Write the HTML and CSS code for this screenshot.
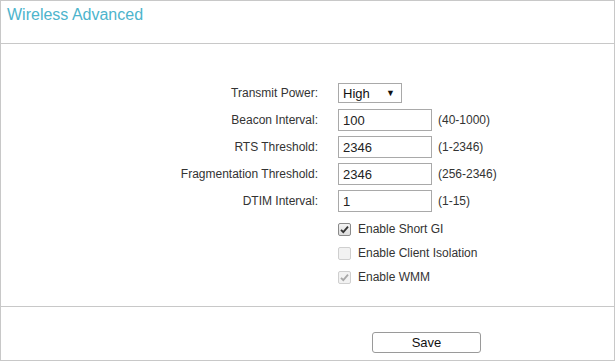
FILE: index.html
```html
<!DOCTYPE html>
<html lang="en">
<head>
    <meta charset="UTF-8">
    <meta name="viewport" content="width=device-width, initial-scale=1.0">
    <title>Wireless Advanced</title>
    <link rel="stylesheet" href="styles.css">
</head>
<body>
    <div class="panel">
        <div class="panel-head">
            <h1 class="panel-title">Wireless Advanced</h1>
        </div>

        <form class="panel-body" id="wireless-advanced-form">
            <div class="form-row">
                <label class="form-label" for="tx-power">Transmit Power:</label>
                <div class="form-control">
                    <span class="select-wrap">
                        <select id="tx-power" class="select">
                            <option>High</option>
                            <option>Middle</option>
                            <option>Low</option>
                        </select>
                    </span>
                </div>
            </div>
            <div class="form-row">
                <label class="form-label" for="beacon">Beacon Interval:</label>
                <div class="form-control">
                    <input type="text" id="beacon" class="text-input" value="100">
                    <span class="range">(40-1000)</span>
                </div>
            </div>
            <div class="form-row">
                <label class="form-label" for="rts">RTS Threshold:</label>
                <div class="form-control">
                    <input type="text" id="rts" class="text-input" value="2346">
                    <span class="range">(1-2346)</span>
                </div>
            </div>
            <div class="form-row">
                <label class="form-label" for="frag">Fragmentation Threshold:</label>
                <div class="form-control">
                    <input type="text" id="frag" class="text-input" value="2346">
                    <span class="range">(256-2346)</span>
                </div>
            </div>
            <div class="form-row">
                <label class="form-label" for="dtim">DTIM Interval:</label>
                <div class="form-control">
                    <input type="text" id="dtim" class="text-input" value="1">
                    <span class="range">(1-15)</span>
                </div>
            </div>

            <div class="check-list">
                <label class="check-row">
                    <span class="check is-checked">
                        <svg viewBox="0 0 13 13" width="13" height="13"><path d="M3 6.8 L5.3 9.2 L10 3.6" /></svg>
                    </span>
                    Enable Short GI
                </label>
                <label class="check-row">
                    <span class="check is-disabled"></span>
                    Enable Client Isolation
                </label>
                <label class="check-row">
                    <span class="check is-checked is-disabled">
                        <svg viewBox="0 0 13 13" width="13" height="13"><path d="M3 6.8 L5.3 9.2 L10 3.6" /></svg>
                    </span>
                    Enable WMM
                </label>
            </div>
        </form>

        <div class="panel-foot">
            <button type="submit" form="wireless-advanced-form" class="btn-save">Save</button>
        </div>
    </div>
</body>
</html>
```

FILE: styles.css
```css
html, body {
    margin: 0;
    padding: 0;
}
body {
    font-family: Arial, "Liberation Sans", sans-serif;
    color: #333;
    background: #fff;
}
.panel {
    width: 615px;
    height: 361px;
    box-sizing: border-box;
    border: 1px solid #c8c8c8;
    display: flex;
    flex-direction: column;
}
.panel-head {
    height: 42px;
    border-bottom: 1px solid #c8c8c8;
}
.panel-title {
    margin: 0;
    padding: 4px 0 0 6px;
    font-size: 16px;
    font-weight: normal;
    line-height: 20px;
    color: #4db4cc;
}
.panel-body {
    flex: 1;
    margin: 0;
    padding-top: 35px;
}
.form-row {
    display: grid;
    grid-template-columns: 317px auto;
    column-gap: 20px;
    align-items: center;
    height: 27px;
}
.form-label {
    text-align: right;
    font-size: 12px;
}
.form-control {
    display: flex;
    align-items: center;
    gap: 6px;
}
.text-input {
    box-sizing: border-box;
    width: 94px;
    height: 22px;
    margin: 0;
    padding: 2px 4px 0;
    border: 1px solid #a9a9a9;
    font-family: inherit;
    font-size: 13px;
    color: #222;
    outline: none;
}
.range {
    font-size: 12px;
}
.select-wrap {
    position: relative;
    display: inline-block;
}
.select-wrap::after {
    content: "\25BC";
    position: absolute;
    right: 7px;
    top: 5px;
    font-size: 9px;
    color: #111;
    pointer-events: none;
}
.select {
    appearance: none;
    -webkit-appearance: none;
    box-sizing: border-box;
    width: 64px;
    height: 20px;
    margin: 0;
    padding: 1px 0 0 4px;
    border: 1px solid #a9a9a9;
    border-radius: 0;
    background: #fff;
    font-family: inherit;
    font-size: 13px;
    color: #111;
}
.check-list {
    padding: 3px 0 0 337px;
}
.check-row {
    display: flex;
    align-items: center;
    gap: 7px;
    height: 24px;
    font-size: 12px;
}
.check {
    box-sizing: border-box;
    width: 13px;
    height: 13px;
    border: 1px solid #8a8a8a;
    border-radius: 2px;
    background: linear-gradient(#f4f4f4, #dcdcdc);
    display: flex;
}
.check svg {
    margin: -1px;
    fill: none;
    stroke: #333;
    stroke-width: 1.8;
}
.check.is-disabled {
    border-color: #cfcfcf;
    background: #f2f2f2;
}
.check.is-disabled svg {
    stroke: #a8a8a8;
}
.panel-foot {
    height: 54px;
    border-top: 1px solid #c8c8c8;
    box-sizing: border-box;
    padding: 25px 0 0 371px;
}
.btn-save {
    box-sizing: border-box;
    width: 109px;
    height: 21px;
    margin: 0;
    padding: 0;
    border: 1px solid #9a9a9a;
    border-radius: 3px;
    background: #fff;
    font-family: inherit;
    font-size: 13px;
    color: #111;
}
```
